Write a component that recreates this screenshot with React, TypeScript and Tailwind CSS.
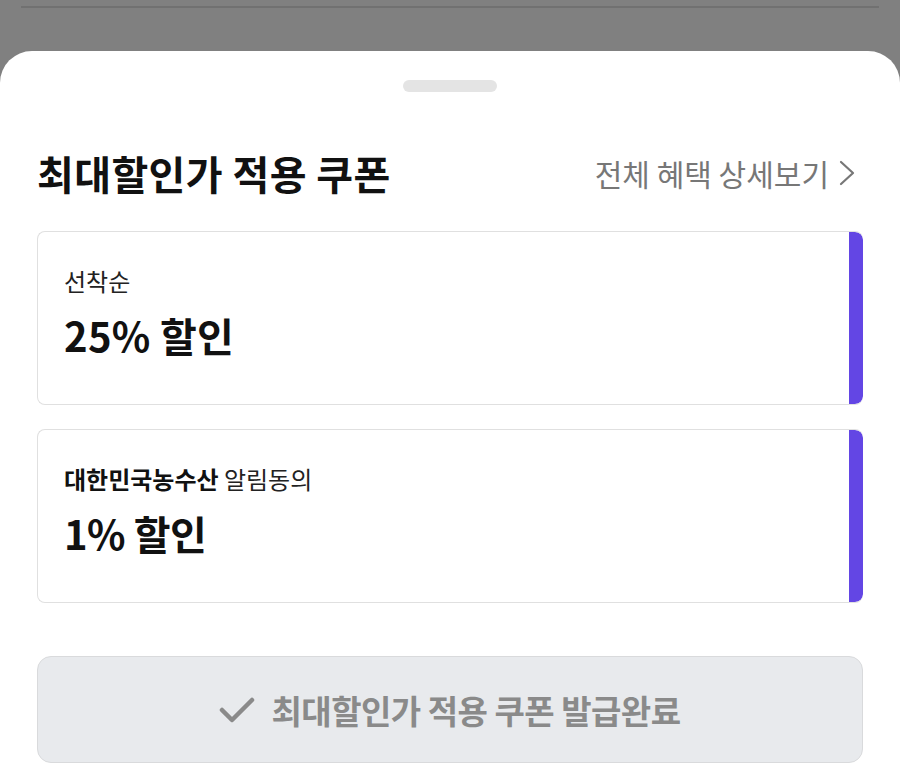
import React from "react";

const font = { fontFamily: '"Noto Sans CJK KR", "Noto Sans", sans-serif' };

function Card({ children }: { children: React.ReactNode }) {
  return (
    <div className="flex h-[174px] overflow-hidden rounded-[8px] border-[1.5px] border-r-0 border-[#e0e0e0]">
      <div className="flex flex-1 flex-col pl-[26px] pt-[33px]">{children}</div>
      <div className="w-[14px] rounded-r-[8px] bg-[#6346e4]" />
    </div>
  );
}

export default function App() {
  return (
    <div className="flex h-[773px] w-full flex-col overflow-hidden bg-[#808080]" style={font}>
      <div className="mx-[21px] mt-[6px] h-[2px] bg-[#717171]" />
      <div className="mt-[43px] flex flex-1 flex-col rounded-t-[32px] bg-white px-[37px]">
        <div className="flex justify-center pt-[29px]">
          <div className="h-[12px] w-[94px] rounded-full bg-[#e4e4e4]" />
        </div>
        <div className="mt-[57px] flex items-center justify-between">
          <h1 className="text-[40px] font-bold leading-[48px] tracking-[0.4px] text-[#111]">최대할인가 적용 쿠폰</h1>
          <div className="flex items-center gap-[10px] pr-[8px] text-[#777]">
            <span className="text-[30px] leading-[40px] tracking-[0px]">전체 혜택 상세보기</span>
            <svg width="16" height="28" viewBox="0 0 16 28" fill="none">
              <path d="M2 3 L14 14 L2 25" stroke="#777" strokeWidth="2.2" strokeLinecap="round" strokeLinejoin="round" />
            </svg>
          </div>
        </div>
        <div className="mt-[34px] flex flex-col gap-[24px]">
          <Card>
            <div className="text-[24px] leading-[32px] text-[#222]">선착순</div>
            <div className="mt-[15px] text-[40px] font-bold leading-[46px] tracking-[0.3px] text-[#111]">25% 할인</div>
          </Card>
          <Card>
            <div className="text-[24px] leading-[32px] text-[#222]">
              <span className="font-bold text-[#111]">대한민국농수산</span> 알림동의
            </div>
            <div className="mt-[15px] text-[40px] font-bold leading-[46px] tracking-[-0.5px] text-[#111]">1% 할인</div>
          </Card>
        </div>
        <div className="mt-[53px] flex h-[107px] items-center justify-center gap-[16px] rounded-[14px] border-[1.5px] border-[#d9dadc] bg-[#e8eaed]">
          <svg width="36" height="28" viewBox="0 0 36 28" fill="none">
            <path d="M3 14 L13 24 L33 4" stroke="#8a8a8a" strokeWidth="4.5" strokeLinecap="round" strokeLinejoin="round" />
          </svg>
          <span className="text-[33px] font-bold leading-[44px] tracking-[-0.5px] text-[#8a8a8a]">최대할인가 적용 쿠폰 발급완료</span>
        </div>
      </div>
    </div>
  );
}
